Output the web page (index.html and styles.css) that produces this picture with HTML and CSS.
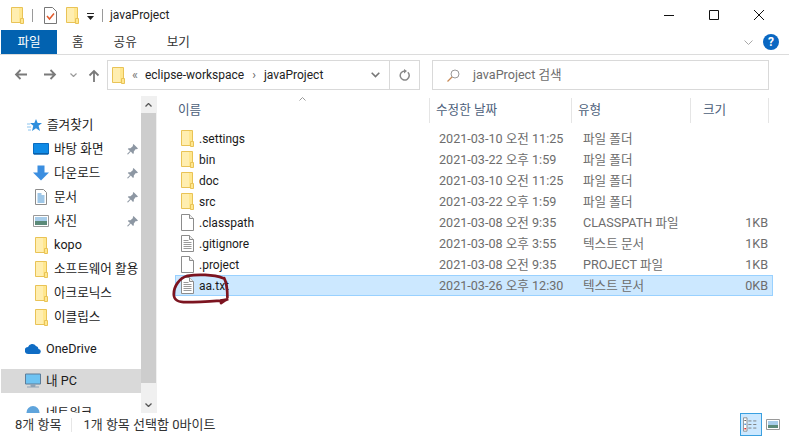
FILE: index.html
```html
<!DOCTYPE html>
<html lang="ko">
<head>
<meta charset="utf-8">
<title>javaProject</title>
<link rel="stylesheet" href="styles.css">
</head>
<body>
<svg class="defs" width="0" height="0">
  <symbol id="folder" viewBox="0 0 13 17"><path d="M.5.5h11v15H.5z" fill="#ffe78f" stroke="#e9c356"/><path d="M1 1h7v14H1z" fill="#ffeeb0"/><path d="M9.500 11.500h3v5h-3z" fill="#ffe78f" stroke="#e9c356"/></symbol>
  <symbol id="blank" viewBox="0 0 13 17"><path d="M.5.5h8l4 4v12H.5z" fill="#fff" stroke="#8c8c8c"/><path d="M8.500.5v4h4" fill="#eee" stroke="#8c8c8c"/></symbol>
  <symbol id="text" viewBox="0 0 13 17"><path d="M.5.5h8l4 4v12H.5z" fill="#fff" stroke="#8c8c8c"/><path d="M8.500.5v4h4" fill="#eee" stroke="#8c8c8c"/><path d="M2.500 5.500h5M2.500 7.500h8M2.500 9.500h8M2.500 11.500h8M2.500 13.500h8" stroke="#9a9a9a"/></symbol>
  <symbol id="pin" viewBox="0 0 11 11"><path d="M6.500 0L11 4.500 9.800 5.200 8.800 5 6.800 7.500 6.800 9.200 6 10 3.800 7.500 1 10.500 0 10 3 7 .8 5 1.500 4.200 3.500 4.200 6 2 5.800 1z" fill="#8d97a3"/></symbol>
</svg>
<div class="window">
  <header class="titlebar">
    <svg class="ico-folder"><use href="#folder"/></svg>
    <span class="tsep"></span>
    <svg class="ico-check" viewBox="0 0 13 17"><path d="M.5.5h8l4 4v12H.5z" fill="#fff" stroke="#777"/><path d="M3 9l2.500 3L10 6.500" fill="none" stroke="#e2592b" stroke-width="1.500"/></svg>
    <svg class="ico-folder ico-gap"><use href="#folder"/></svg>
    <svg class="ico-drop" viewBox="0 0 7 7"><path d="M0 0h7v1H0zM0 3h7L3.500 7z" fill="#222"/></svg>
    <span class="tsep tsep-b"></span>
    <span class="title">javaProject</span>
    <span class="winbtns">
      <svg viewBox="0 0 10 10"><path d="M0 5.500h10" stroke="#111"/></svg>
      <svg viewBox="0 0 10 10"><path d="M.5.500h9v9h-9z" fill="none" stroke="#111"/></svg>
      <svg viewBox="0 0 10 10"><path d="M0 0l10 10M10 0L0 10" stroke="#111"/></svg>
    </span>
  </header>
  <nav class="ribbon">
    <span class="tab tab-file">파일</span>
    <span class="tab tab-home">홈</span>
    <span class="tab tab-share">공유</span>
    <span class="tab tab-view">보기</span>
    <svg class="rib-chev" viewBox="0 0 9 5"><path d="M.5.500l4 4 4-4" fill="none" stroke="#a8a8a8"/></svg>
    <span class="help">?</span>
  </nav>
  <div class="addrrow">
    <svg class="nav nav-back" viewBox="0 0 13 11"><path d="M13 5.500H2M6.500 1L2 5.500 6.500 10" fill="none" stroke="#7a7a7a" stroke-width="1.800"/></svg>
    <svg class="nav nav-fwd" viewBox="0 0 13 11"><path d="M0 5.500h11M6.500 1L11 5.500 6.500 10" fill="none" stroke="#7a7a7a" stroke-width="1.800"/></svg>
    <svg class="nav-mini" viewBox="0 0 7 4"><path d="M.5.500l3 3 3-3" fill="none" stroke="#9a9a9a" stroke-width="1.200"/></svg>
    <svg class="nav nav-up" viewBox="0 0 12 13"><path d="M6 13V2M1.500 6.500L6 2l4.500 4.500" fill="none" stroke="#7a7a7a" stroke-width="1.800"/></svg>
    <div class="addr">
      <svg class="ico-folder"><use href="#folder"/></svg>
      <span class="crumb-more">«</span>
      <span class="crumb">eclipse-workspace</span>
      <span class="crumb-sep">›</span>
      <span class="crumb">javaProject</span>
      <svg class="addr-chev" viewBox="0 0 9 6"><path d="M.7.700L4.500 4.500 8.300.7" fill="none" stroke="#777" stroke-width="1.600"/></svg>
      <span class="addr-refresh"><svg viewBox="0 0 11 12"><path d="M8.800 3.200A4.500 4.500 0 1 1 5.500 2" fill="none" stroke="#888" stroke-width="1.500"/><path d="M5 0v4.500L8 2z" fill="#888"/></svg></span>
    </div>
    <div class="search">
      <svg viewBox="0 0 13 13"><circle cx="8" cy="5" r="4" fill="none" stroke="#999"/><path d="M5 8l-4.500 4.500" stroke="#c98a55" stroke-width="1.200"/></svg>
      <span>javaProject 검색</span>
    </div>
  </div>
  <div class="main">
    <aside class="sidebar">
      <ul class="tree">
        <li class="item lvl0 fav"><svg class="i-star" viewBox="0 0 15 13"><path d="M9 0l1.700 4H15l-3.400 2.800L13 12 9 9.200 5 12l1.300-5.200L3 4h4.300z" fill="#2f8fdd"/><path d="M0 5h3M0 8h4M1 11h3" stroke="#8cc4ee"/></svg><span>즐겨찾기</span></li>
        <li class="item lvl1"><svg class="i-16" viewBox="0 0 16 12"><path d="M.5.500h15v10.500H.5z" fill="#0f8be6" stroke="#0a6cc0"/><path d="M1 10h14v1.500H1z" fill="#0a5fa8"/></svg><span>바탕 화면</span><svg class="pin"><use href="#pin"/></svg></li>
        <li class="item lvl1"><svg class="i-16" viewBox="0 0 16 15"><path d="M4.500 0h7v7H16l-8 8-8-8h4.500z" fill="#3b8ee0"/></svg><span>다운로드</span><svg class="pin"><use href="#pin"/></svg></li>
        <li class="item lvl1"><svg class="i-16" viewBox="0 0 16 16"><path d="M2.500.5h8l3 3v12h-11z" fill="#fff" stroke="#8c8c8c"/><path d="M4.500 5h4M4.500 7h7M4.500 9h7M4.500 11h7M4.500 13h7" stroke="#3f8fd0"/></svg><span>문서</span><svg class="pin"><use href="#pin"/></svg></li>
        <li class="item lvl1"><svg class="i-16" viewBox="0 0 16 12"><path d="M.5.500h15v11H.5z" fill="#fff" stroke="#999"/><path d="M2 2h12v4H2z" fill="#a8cdea"/><path d="M2 6h12v4H2z" fill="#5b8a78"/></svg><span>사진</span><svg class="pin"><use href="#pin"/></svg></li>
        <li class="item lvl1"><svg class="i-folder"><use href="#folder"/></svg><span>kopo</span></li>
        <li class="item lvl1"><svg class="i-folder"><use href="#folder"/></svg><span class="clip">소프트웨어 활용</span></li>
        <li class="item lvl1"><svg class="i-folder"><use href="#folder"/></svg><span>아크로닉스</span></li>
        <li class="item lvl1"><svg class="i-folder"><use href="#folder"/></svg><span>이클립스</span></li>
        <li class="item lvl0 group"><svg class="i-16" viewBox="0 0 16 10"><path d="M3.500 10A3.500 3.500 0 0 1 3 3a4.500 4.500 0 0 1 8-1 3.500 3.500 0 0 1 2.500 3A2.500 2.500 0 0 1 13 10z" fill="#0f6cc4"/></svg><span>OneDrive</span></li>
        <li class="item lvl0 group selected"><svg class="i-16" viewBox="0 0 16 15"><path d="M.5.500h15v10H.5z" fill="#6ec3f2" stroke="#5d7d99"/><path d="M6 11h4v2H6zM2 13.500h12" fill="#8fa3b5" stroke="#8fa3b5"/></svg><span>내 PC</span></li>
        <li class="item lvl0 group"><svg class="i-16" viewBox="0 0 16 15"><circle cx="8" cy="7" r="6.500" fill="#5fa4dc"/></svg><span>네트워크</span></li>
      </ul>
    </aside>
    <div class="scrollbar">
      <span class="sb-btn"><svg viewBox="0 0 7 4"><path d="M.5 3.500l3-3 3 3" fill="none" stroke="#555" stroke-width="1.300"/></svg></span>
      <span class="sb-thumb"></span>
      <span class="sb-btn sb-btn-down"><svg viewBox="0 0 7 4"><path d="M.5.500l3 3 3-3" fill="none" stroke="#555" stroke-width="1.300"/></svg></span>
    </div>
    <section class="files">
      <div class="colhead">
        <span class="hc hc-name">이름<svg class="sort" viewBox="0 0 7 4"><path d="M.5 3.500l3-3 3 3" fill="none" stroke="#999"/></svg></span>
        <span class="hc">수정한 날짜</span>
        <span class="hc">유형</span>
        <span class="hc hc-size">크기</span>
      </div>
      <div class="rows">
        <div class="row"><span class="name"><svg class="i-folder"><use href="#folder"/></svg>.settings</span><span>2021-03-10 오전 11:25</span><span>파일 폴더</span><span class="size"></span></div>
        <div class="row"><span class="name"><svg class="i-folder"><use href="#folder"/></svg>bin</span><span>2021-03-22 오후 1:59</span><span>파일 폴더</span><span class="size"></span></div>
        <div class="row"><span class="name"><svg class="i-folder"><use href="#folder"/></svg>doc</span><span>2021-03-10 오전 11:25</span><span>파일 폴더</span><span class="size"></span></div>
        <div class="row"><span class="name"><svg class="i-folder"><use href="#folder"/></svg>src</span><span>2021-03-22 오후 1:59</span><span>파일 폴더</span><span class="size"></span></div>
        <div class="row"><span class="name"><svg class="i-folder"><use href="#blank"/></svg>.classpath</span><span>2021-03-08 오전 9:35</span><span>CLASSPATH 파일</span><span class="size">1KB</span></div>
        <div class="row"><span class="name"><svg class="i-folder"><use href="#text"/></svg>.gitignore</span><span>2021-03-08 오후 3:55</span><span>텍스트 문서</span><span class="size">1KB</span></div>
        <div class="row"><span class="name"><svg class="i-folder"><use href="#blank"/></svg>.project</span><span>2021-03-08 오전 9:35</span><span>PROJECT 파일</span><span class="size">1KB</span></div>
        <div class="row row-sel"><span class="name"><svg class="i-folder"><use href="#text"/></svg>aa.txt</span><span>2021-03-26 오후 12:30</span><span>텍스트 문서</span><span class="size">0KB</span></div>
      </div>
    </section>
    <svg class="scribble" viewBox="0 0 80 50"><path d="M63 4C50 -1 30 -1 18 1 8 4 1 14 1 24c0 8 6 10 16 10 14 0 28-1 42-2 6-1 8-1 10-2 -3 1-6 3-9 5M64 4c3 6 4 14 4 24" fill="none" stroke="#7c1420" stroke-width="3.400" stroke-linecap="round"/></svg>
  </div>
  <footer class="status">
    <span class="st-a">8개 항목</span>
    <span class="st-sep"></span>
    <span>1개 항목 선택함 0바이트</span>
    <span class="views">
      <span class="view-on"><svg viewBox="0 0 18 16"><path d="M.5.500h4v15h-4z" fill="#fff" stroke="#888"/><path d="M1.500 3h2v1h-2z" fill="#555"/><path d="M1.500 7h2v1.500h-2z" fill="#4a90d9"/><path d="M1.500 12h2v1.500h-2z" fill="#d22"/><path d="M6 4h3.500M11.500 4H15M6 8h3.500M11.500 8H15M6 12h3.500M11.500 12H15" stroke="#777"/></svg></span>
      <svg class="view-off" viewBox="0 0 14 11"><path d="M.5.500h13v10H.5z" fill="#fff" stroke="#999"/><path d="M2 2h10v4H2z" fill="#a8cdea"/><path d="M2 6h10v3H2z" fill="#5b8a78"/></svg>
    </span>
  </footer>
</div>
</body>
</html>
```
FILE: styles.css
```css
* { box-sizing: border-box; }
html, body { margin: 0; padding: 0; background: #fff; }
body { font: 12.600px/16px Roboto, "Noto Sans CJK KR", sans-serif; color: #1a1a1a; overflow: hidden; }
.defs { display: block; height: 0; }
.window { width: 789px; height: 436px; display: flex; flex-direction: column; overflow: hidden; position: relative; }

.titlebar { height: 30px; display: flex; align-items: center; padding-left: 11px; flex: none; }
.ico-folder { width: 13px; height: 17px; flex: none; }
.tsep { width: 1px; height: 13px; background: #9a9a9a; margin: 0 11px 0 8px; }
.tsep-b { margin: 0 7px 0 8px; }
.ico-check { width: 13px; height: 17px; }
.ico-gap { margin-left: 9px; }
.ico-drop { width: 7px; height: 7px; margin-left: 8px; margin-top: 2px; }
.title { color: #222; font-size: 12px; }
.winbtns { margin-left: auto; display: flex; gap: 35px; padding-right: 25px; }
.winbtns svg { width: 10px; height: 10px; display: block; }

.ribbon { height: 25px; display: flex; align-items: center; border-bottom: 1px solid #dcdcdc; padding-left: 1px; flex: none; }
.tab { color: #333; }
.tab-file { width: 56px; height: 24px; background: #0262b0; color: #fff; text-align: center; line-height: 24px; }
.tab-home { margin-left: 15px; }
.tab-share { margin-left: 30px; }
.tab-view { margin-left: 30px; }
.rib-chev { width: 9px; height: 5px; margin-left: auto; }
.help { width: 16px; height: 16px; border-radius: 50%; background: #0a67c2; color: #fff; font-weight: 700; text-align: center; line-height: 16px; font-size: 12px; margin: 0 10px 0 10px; }

.addrrow { height: 41px; padding-top: 5px; display: flex; flex: none; align-items: flex-start; }
.nav { flex: none; margin-top: 9px; }
.nav-back { width: 13px; height: 11px; margin-left: 14px; }
.nav-fwd { width: 13px; height: 11px; margin-left: 17px; }
.nav-mini { width: 7px; height: 4px; margin: 13px 0 0 13px; flex: none; }
.nav-up { width: 12px; height: 13px; margin: 9px 0 0 11px; }
.addr { width: 313px; height: 30px; margin-left: 7px; border: 1px solid #d9d9d9; display: flex; align-items: center; padding-left: 4px; }
.crumb-more { color: #777; margin: 0 7px 0 7px; }
.crumb { color: #222; font-size: 12px; }
.crumb-sep { color: #666; margin: 0 8px; }
.addr-chev { width: 9px; height: 6px; margin-left: auto; margin-right: 9px; }
.addr-refresh { width: 30px; height: 28px; border-left: 1px solid #d9d9d9; display: flex; align-items: center; justify-content: center; }
.addr-refresh svg { width: 11px; height: 12px; }
.search { width: 337px; height: 30px; margin-left: 12px; border: 1px solid #d9d9d9; display: flex; align-items: center; padding-left: 14px; color: #6d6d6d; }
.search svg { width: 13px; height: 13px; margin-right: 13px; }

.main { flex: 1; display: flex; min-height: 0; position: relative; }
.sidebar { width: 141px; flex: none; overflow: hidden; padding-top: 17px; }
.tree { list-style: none; margin: 0; padding: 0; }
.item { height: 24px; display: flex; align-items: center; white-space: nowrap; overflow: hidden; color: #1a1a1a; position: relative; margin-left: 1px; }
.lvl0 { padding-left: 24px; }
.lvl1 { padding-left: 32px; }
.lvl0 > span { margin-left: 5px; }
.lvl1 > span { margin-left: 5px; }
.fav { padding-left: 26px; }
.group { margin-top: 8px; }
.group + .group { margin-top: 8px; }
.selected { background: #d9d9d9; }
.i-star { width: 15px; height: 13px; flex: none; }
.i-16 { width: 16px; height: 16px; flex: none; }
.i-folder { width: 13px; height: 17px; flex: none; }
.lvl1 .i-folder { margin-left: 2px; margin-right: 1px; }
.pin { width: 11px; height: 11px; margin-left: auto; margin-right: 3px; }
.clip { overflow: hidden; }

.scrollbar { width: 15px; flex: none; display: flex; flex-direction: column; background: #f0f0f0; }
.sb-btn { height: 17px; display: flex; align-items: center; justify-content: center; flex: none; }
.sb-btn svg { width: 7px; height: 4px; }
.sb-thumb { height: 270px; background: #cdcdcd; flex: none; }
.sb-btn-down { margin-top: auto; }

.files { flex: 1; min-width: 0; padding-left: 18px; border-left: 1px solid #f0f0f0; }
.colhead { height: 25px; margin-top: 2px; display: grid; grid-template-columns: 255px 142px 119px 78px; }
.hc { color: #4c607a; padding-left: 6px; line-height: 24px; border-right: 1px solid #e5e5e5; position: relative; }
.hc-name { padding-left: 3px; }
.hc-size { padding-left: 12px; }
.sort { width: 7px; height: 4px; position: absolute; left: 124px; top: -1px; }
.rows { margin-top: 5px; width: 598px; }
.row { height: 21px; display: grid; grid-template-columns: 263px 144px 131px 54px; align-items: center; color: #6d6d6d; border: 1px solid transparent; white-space: nowrap; }
.name { display: flex; align-items: center; gap: 5px; color: #1a1a1a; padding-left: 5px; font-size: 12px; }
.size { text-align: right; }
.row-sel { background: #cce8ff; border-color: #99d1ff; }

.scribble { position: absolute; left: 172px; top: 179px; width: 66px; height: 40px; overflow: visible; }

.status { height: 23px; flex: none; display: flex; align-items: center; padding-left: 15px; color: #333; font-size: 13px; }
.st-sep { width: 1px; height: 14px; background: #e6e6e6; margin: 0 11px 0 10px; }
.views { margin-left: auto; display: flex; align-items: center; padding-right: 9px; gap: 4px; height: 23px; }
.view-on { width: 22px; height: 23px; background: #cce8ff; border: 1px solid #3aa0e0; display: flex; align-items: center; justify-content: center; }
.view-on svg { width: 16px; height: 15px; }
.view-off { width: 14px; height: 11px; }
```
